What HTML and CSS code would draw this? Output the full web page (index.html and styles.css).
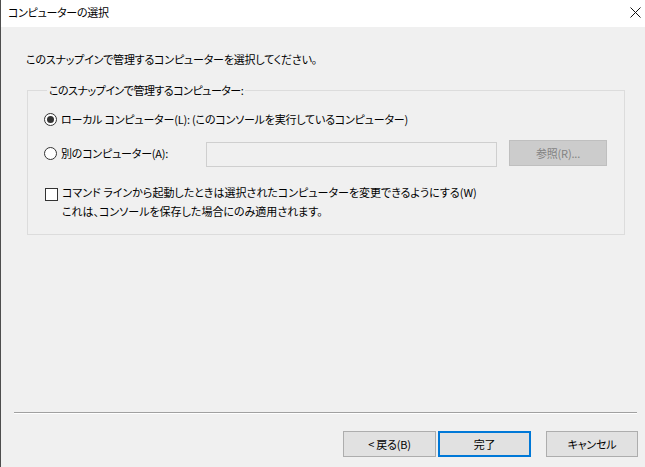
FILE: index.html
```html
<!DOCTYPE html>
<html lang="ja">
<head>
<meta charset="utf-8">
<link rel="stylesheet" href="styles.css">
</head>
<body>
<div class="window">
  <div class="titlebar">
    <span class="title">コンピューターの選択</span>
    <svg class="close" width="11" height="11" viewBox="0 0 11 11"><path d="M0.5 0.5 L10.5 10.5 M10.5 0.5 L0.5 10.5" stroke="#111" stroke-width="1" fill="none"/></svg>
  </div>
  <div class="content">
    <p class="instruction">このスナップインで管理するコンピューターを選択してください。</p>
    <fieldset class="group">
      <legend class="legend">このスナップインで管理するコンピューター:</legend>
      <div class="row row-local">
        <span class="radio checked"></span>
        <span class="label">ローカル コンピューター(L): (このコンソールを実行しているコンピューター)</span>
      </div>
      <div class="row row-other">
        <span class="radio"></span>
        <span class="label label-other">別のコンピューター(A):</span>
        <span class="textbox"></span>
        <span class="btn btn-disabled">参照(R)...</span>
      </div>
      <div class="row row-check">
        <span class="checkbox"></span>
        <span class="label check-text">コマンド ラインから起動したときは選択されたコンピューターを変更できるようにする(W)<br>これは、コンソールを保存した場合にのみ適用されます。</span>
      </div>
    </fieldset>
  </div>
  <div class="footer">
    <div class="separator"></div>
    <div class="buttons">
      <span class="btn btn-back">&lt; 戻る(B)</span>
      <span class="btn btn-default">完了</span>
      <span class="btn btn-cancel">キャンセル</span>
    </div>
  </div>
</div>
</body>
</html>
```

FILE: styles.css
```css
html, body {
  margin: 0;
  padding: 0;
  background: #f0f0f0;
}
body {
  font-family: "Noto Sans CJK JP", "Noto Sans", sans-serif;
  font-size: 11px;
  letter-spacing: -0.2px;
  font-feature-settings: "palt";
  color: #000;
}
.window {
  width: 645px;
  height: 467px;
  box-sizing: border-box;
  border-left: 1px solid #4d4d4d;
  display: flex;
  flex-direction: column;
  background: #f0f0f0;
}
.titlebar {
  height: 27px;
  flex: none;
  background: #fff;
  display: flex;
  align-items: center;
  justify-content: space-between;
  padding: 0 4px 3px 7px;
  box-sizing: border-box;
}
.title {
  line-height: 16px;
  letter-spacing: -0.3px;
}
.close {
  display: block;
}
.content {
  flex: 1;
  padding: 24px 0 0 25px;
}
.instruction {
  margin: 0;
  line-height: 16px;
}
.group {
  margin: 15px 0 0 1px;
  width: 598px;
  box-sizing: border-box;
  border: 1px solid #dcdcdc;
  padding: 11px 16px 13px 16px;
  min-width: 0;
}
.legend {
  padding: 0 2px;
  margin-left: 3px;
  line-height: 16px;
  letter-spacing: -0.5px;
}
.row {
  display: flex;
  align-items: center;
}
.row-local {
  height: 20px;
}
.row-other {
  height: 26px;
  margin-top: 11px;
}
.row-check {
  margin-top: 19px;
  align-items: flex-start;
}
.label {
  line-height: 16px;
  white-space: nowrap;
}
.radio {
  width: 13px;
  height: 13px;
  box-sizing: border-box;
  border: 1px solid #333;
  border-radius: 50%;
  background: #fff;
  margin-right: 4px;
  flex: none;
  display: flex;
  align-items: center;
  justify-content: center;
}
.radio.checked::after {
  content: "";
  width: 7px;
  height: 7px;
  border-radius: 50%;
  background: #333;
}
.label-other {
  width: 145px;
}
.textbox {
  width: 291px;
  height: 25px;
  box-sizing: border-box;
  border: 1px solid #cfcfcf;
  background: #f0f0f0;
  margin-right: 12px;
  margin-top: 2px;
}
.btn {
  box-sizing: border-box;
  height: 26px;
  display: flex;
  align-items: center;
  justify-content: center;
  border: 1px solid #adadad;
  background: #e1e1e1;
  line-height: 16px;
  white-space: nowrap;
}
.btn-disabled {
  width: 98px;
  background: #cccccc;
  border-color: #bfbfbf;
  color: #838383;
}
.checkbox {
  width: 13px;
  height: 13px;
  box-sizing: border-box;
  border: 1px solid #333;
  background: #fff;
  margin: 3px 4px 0 1px;
  flex: none;
}
.check-text {
  line-height: 19px;
  margin-top: -2px;
  letter-spacing: 0;
}
.footer {
  flex: none;
  height: 55px;
}
.separator {
  margin: 0 8px 0 13px;
  height: 1px;
  border-top: 1px solid #a0a0a0;
  background: #fff;
}
.buttons {
  display: flex;
  justify-content: flex-end;
  padding: 17px 7px 0 0;
}
.btn-back {
  width: 93px;
  margin-right: 2px;
}
.btn-default {
  width: 93px;
  border: 2px solid #0078d7;
  margin-right: 15px;
}
.btn-cancel {
  width: 92px;
}
```
